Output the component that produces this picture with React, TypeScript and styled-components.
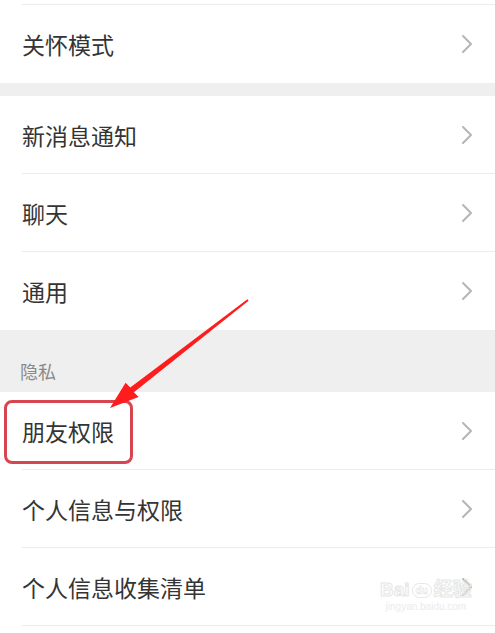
import React from 'react';
import styled, { createGlobalStyle } from 'styled-components';

const GlobalStyles = createGlobalStyle`
  html, body {
    margin: 0;
    padding: 0;
    background: #ffffff;
  }
  body {
    font-family: "Noto Sans CJK SC", "Noto Sans", sans-serif;
    -webkit-font-smoothing: antialiased;
  }
`;

type Group = {
  header?: string;
  gap?: boolean;
  lead?: boolean; // tail of a row scrolled off the top
  trail?: boolean; // head of a row cut by the bottom edge
  items: string[];
};

const groups: Group[] = [
  { lead: true, items: ['关怀模式'] },
  { gap: true, items: ['新消息通知', '聊天', '通用'] },
  { header: '隐私', trail: true, items: ['朋友权限', '个人信息与权限', '个人信息收集清单'] },
];

function Chevron() {
  return (
    <ChevronIcon width="12" height="20" viewBox="0 0 12 20">
      <polyline points="2,2 10,10 2,18" fill="none" stroke="#b5b5b5" strokeWidth="2" strokeLinecap="round" strokeLinejoin="round" />
    </ChevronIcon>
  );
}

export default function App() {
  return (
    <>
      <GlobalStyles />
      <Screen>
        {groups.map((g, gi) => (
          <React.Fragment key={gi}>
            {g.gap && <Gap />}
            {g.header && (
              <SectionHeader>
                <span>{g.header}</span>
              </SectionHeader>
            )}
            <List>
              {g.lead && <Stub $h={5} />}
              {g.items.map((label) => (
                <Row key={label}>
                  <Label>{label}</Label>
                  <Chevron />
                </Row>
              ))}
              {g.trail && <Stub $h={20} />}
            </List>
          </React.Fragment>
        ))}

        <Highlight />
        <Arrow width="495" height="633" viewBox="0 0 495 633">
          <polygon
            points="247.4,299.2 130.3,387.4 125.6,382.7 110,408 138.6,396.9 133.9,392.2 248.6,300.8"
            fill="#ff1c1c"
          />
        </Arrow>

        <Watermark>
          <WmLogo>
            Bai<WmPaw>du</WmPaw>经验
          </WmLogo>
          <WmUrl>jingyan.baidu.com</WmUrl>
        </Watermark>
      </Screen>
    </>
  );
}

const Screen = styled.div`
  position: relative;
  width: 495px;
  height: 633px;
  overflow: hidden;
  background: #ffffff;
`;

const Gap = styled.div`
  height: 13px;
  background: #efefef;
`;

const SectionHeader = styled.div`
  height: 62px;
  background: #efefef;
  display: flex;
  align-items: flex-end;
  padding: 0 0 9px 20px;
  box-sizing: border-box;

  span {
    font-size: 18px;
    line-height: 24px;
    color: #8a8a8a;
  }
`;

const List = styled.div`
  background: #ffffff;

  & > * {
    position: relative;
  }

  & > *:not(:last-child)::after {
    content: '';
    position: absolute;
    left: 22px;
    right: 0;
    bottom: 0;
    height: 1px;
    background: #ececec;
  }
`;

const Stub = styled.div<{ $h: number }>`
  height: ${(p) => p.$h}px;
`;

const Row = styled.div`
  height: 78px;
  box-sizing: border-box;
  display: flex;
  align-items: center;
  justify-content: space-between;
  padding: 0 22px;
`;

const Label = styled.span`
  font-size: 23px;
  line-height: 30px;
  color: #343434;
`;

const ChevronIcon = styled.svg`
  display: block;
  flex-shrink: 0;
`;

const Highlight = styled.div`
  position: absolute;
  left: 4px;
  top: 400px;
  width: 129px;
  height: 64px;
  box-sizing: border-box;
  border: 3px solid #d64550;
  border-radius: 8px;
`;

const Arrow = styled.svg`
  position: absolute;
  left: 0;
  top: 0;
  pointer-events: none;
`;

const Watermark = styled.div`
  position: absolute;
  left: 380px;
  top: 580px;
  display: flex;
  flex-direction: column;
  align-items: center;
  white-space: nowrap;
  pointer-events: none;
`;

const WmLogo = styled.div`
  font-family: "Liberation Sans", "Noto Sans CJK SC", sans-serif;
  font-size: 19px;
  line-height: 20px;
  font-weight: bold;
  color: transparent;
  -webkit-text-stroke: 1px #e6e6e6;
  display: flex;
  align-items: center;
  gap: 2px;
`;

const WmPaw = styled.span`
  font-size: 10px;
  line-height: 13px;
  padding: 0 3px;
  border: 1px solid #e6e6e6;
  border-radius: 8px;
  -webkit-text-stroke: 0.5px #e2e2e2;
`;

const WmUrl = styled.div`
  font-family: "Liberation Sans", sans-serif;
  font-size: 10px;
  line-height: 13px;
  color: #ebebeb;
`;
